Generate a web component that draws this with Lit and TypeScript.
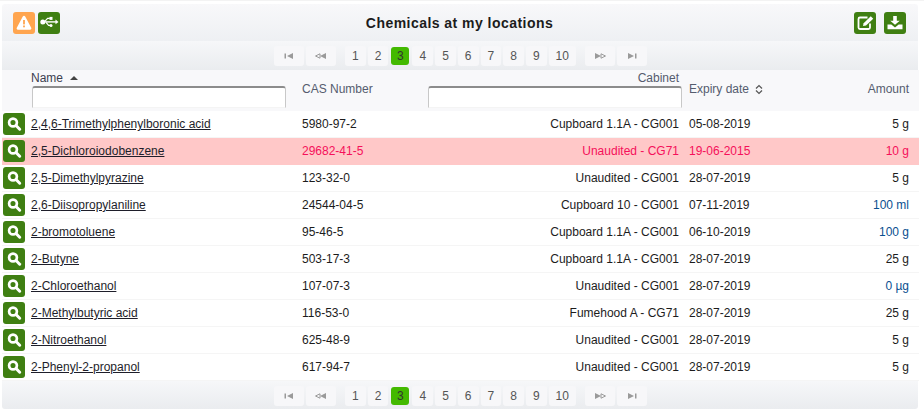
import { LitElement, html, css, svg } from "lit";
import { customElement } from "lit/decorators.js";

type Row = [string, string, string, string, string, boolean?];

const ROWS: Row[] = [
  ["2,4,6-Trimethylphenylboronic acid", "5980-97-2", "Cupboard 1.1A - CG001", "05-08-2019", "5 g"],
  ["2,5-Dichloroiodobenzene", "29682-41-5", "Unaudited - CG71", "19-06-2015", "10 g"],
  ["2,5-Dimethylpyrazine", "123-32-0", "Unaudited - CG001", "28-07-2019", "5 g"],
  ["2,6-Diisopropylaniline", "24544-04-5", "Cupboard 10 - CG001", "07-11-2019", "100 ml", true],
  ["2-bromotoluene", "95-46-5", "Cupboard 1.1A - CG001", "06-10-2019", "100 g", true],
  ["2-Butyne", "503-17-3", "Cupboard 1.1A - CG001", "28-07-2019", "25 g"],
  ["2-Chloroethanol", "107-07-3", "Unaudited - CG001", "28-07-2019", "0 µg", true],
  ["2-Methylbutyric acid", "116-53-0", "Fumehood A - CG71", "28-07-2019", "25 g"],
  ["2-Nitroethanol", "625-48-9", "Unaudited - CG001", "28-07-2019", "5 g"],
  ["2-Phenyl-2-propanol", "617-94-7", "Unaudited - CG001", "28-07-2019", "5 g"],
];

const PAGES = [1, 2, 3, 4, 5, 6, 7, 8, 9, 10];

const warnIcon = svg`<svg class="ico" viewBox="0 0 22 22"><path d="M11 3.800c.5 0 .9.3 1.200.8l6 11.200c.5 1-.1 1.900-1.100 1.900H4.900c-1 0-1.600-.9-1.100-1.900l6-11.200c.3-.5.7-.8 1.200-.8z" fill="#fff"/><rect x="10.100" y="8" width="1.800" height="4.400" fill="#ffa54f"/><rect x="10.100" y="13.500" width="1.800" height="1.800" fill="#ffa54f"/></svg>`;
const usbIcon = svg`<svg class="ico" viewBox="0 0 22 22"><path d="M3 9.200h15.500v1.400H3z" fill="#fff"/><circle cx="4.800" cy="9.900" r="2.500" fill="#fff"/><path d="M6.600 9.600l3-3.200h2.200M8 10.400l2.600 3h1.800" stroke="#fff" stroke-width="1.200" fill="none"/><rect x="11.500" y="4.900" width="3" height="3" fill="#fff"/><circle cx="13" cy="13.400" r="1.500" fill="#fff"/><path d="M17.500 7.500l3 2.400-3 2.400z" fill="#fff"/></svg>`;
const editIcon = svg`<svg class="ico" viewBox="0 0 22 22"><path d="M13.500 5.500H6A1.500 1.500 0 0 0 4.500 7v8.500A1.500 1.500 0 0 0 6 17h8.500a1.500 1.500 0 0 0 1.500-1.500V11.500" stroke="#fff" stroke-width="1.800" fill="none"/><path d="M9 14l.6-2.800 7.200-6.900 2.400 2.400-7.200 6.800z" fill="#fff"/></svg>`;
const dlIcon = svg`<svg class="ico" viewBox="0 0 22 22"><path d="M9.200 4h3.600v4.800h3L11 12.800 6.200 8.800h3z" fill="#fff"/><path d="M3.500 12.500h3.800L11 15.500l3.700-3h3.800v4.800h-15z" fill="#fff"/></svg>`;
const lensIcon = svg`<svg class="ico" viewBox="0 0 22 22"><circle cx="10" cy="9.500" r="3.900" fill="none" stroke="#fff" stroke-width="2.700"/><path d="M13 12.500l3.700 3.700" stroke="#fff" stroke-width="3" stroke-linecap="round"/></svg>`;

const glyphFirst = svg`<svg class="pg" viewBox="0 0 10 6"><rect x="0.500" y="0.500" width="1.500" height="5" /><path d="M9 0v6L3 3z"/></svg>`;
const glyphPrev = svg`<svg class="pg wide" viewBox="0 0 12 6"><path d="M5 .8v4.400L.5 3z" fill="none" stroke="#9a9a9a"/><path d="M11 0v6L5 3z"/></svg>`;
const glyphNext = svg`<svg class="pg wide" viewBox="0 0 12 6"><path d="M1 0v6l6-3z"/><path d="M7 .8v4.400L11.500 3z" fill="none" stroke="#9a9a9a"/></svg>`;
const glyphLast = svg`<svg class="pg" viewBox="0 0 10 6"><path d="M1 0v6l6-3z"/><rect x="8" y="0.500" width="1.500" height="5" /></svg>`;

@customElement("app-root")
export class AppRoot extends LitElement {
  static styles = css`
    :host {
      display: block;
      width: 924px;
      height: 410px;
      background: #fff;
      box-shadow: inset 0 1px 0 #f3f3f3;
      font-family: "Liberation Sans", Arial, sans-serif;
      font-size: 12px;
      color: #1c1c1c;
      overflow: hidden;
    }
    .panel {
      box-sizing: border-box;
      width: 917px;
      margin-left: 2px;
      padding-top: 4px;
    }
    .bar {
      box-sizing: border-box;
      height: 37px;
      width: 916px;
      padding: 8px 12px 0 11px;
      display: flex;
      background: linear-gradient(#f8f8fa, #eef0f3);
      border-radius: 3px 3px 0 0;
    }
    .tools {
      display: flex;
      gap: 3px;
    }
    .tools.right {
      gap: 8px;
    }
    .title {
      flex: 1;
      text-align: center;
      padding-left: 5px;
      font-size: 14px;
      font-weight: bold;
      line-height: 22px;
      letter-spacing: 0.46px;
      color: #1c1c1c;
    }
    .btn {
      display: block;
      width: 22px;
      height: 22px;
      border-radius: 3px;
      background: #3f7f12;
    }
    .btn.warn {
      background: #ffa54f;
    }
    .ico {
      display: block;
      width: 22px;
      height: 22px;
    }
    .pager {
      box-sizing: border-box;
      width: 916px;
      height: 29px;
      padding-top: 5px;
      padding-left: 3px;
      display: flex;
      justify-content: center;
      background: linear-gradient(#f6f7f9, #eaecef);
    }
    .pager.bottom {
      height: 28px;
      border-radius: 0 0 3px 3px;
    }
    .pbtn {
      box-sizing: border-box;
      height: 20px;
      padding: 0 7px;
      margin-right: 2px;
      border-radius: 3px;
      background: #f7f7f9;
      color: #555;
      line-height: 20px;
      text-align: center;
    }
    .pbtn.nav {
      width: 30px;
      padding: 0;
      display: flex;
      align-items: center;
      justify-content: center;
    }
    .pbtn.cur {
      min-width: 18px;
      height: 18px;
      line-height: 18px;
      padding: 0 2px;
      margin: 1px 3px 0 1px;
      background: #43b900;
      color: #333;
    }
    .pbtn.gap-r {
      margin-right: 9px;
    }
    .pg {
      display: block;
      width: 10px;
      height: 6px;
      fill: #9a9a9a;
    }
    .pg.wide {
      width: 12px;
    }
    .row,
    .head {
      display: grid;
      grid-template-columns: 29px 271px 120px 257px 110px 130px;
      width: 917px;
    }
    .head {
      height: 41px;
      background: #f8f8fa;
      color: #555c6e;
    }
    .hname {
      padding-top: 1px;
    }
    .hlabel {
      line-height: 14px;
      color: #3c4050;
      display: flex;
      align-items: center;
      gap: 7px;
    }
    .arrow {
      width: 0;
      height: 0;
      border-left: 4px solid transparent;
      border-right: 4px solid transparent;
      border-bottom: 4px solid #444;
    }
    .filter {
      box-sizing: border-box;
      display: block;
      width: 254px;
      height: 22px;
      margin: 1px 0 0 1px;
      background: #fff;
      border: 1px solid #c8c8c8;
      border-top: 2px solid #8c8c8c;
      border-bottom-color: #f4f4f4;
      border-radius: 3px 3px 0 0;
      padding: 0;
    }
    .hcab {
      padding-top: 1px;
    }
    .hcab .lab {
      text-align: right;
      line-height: 14px;
      color: #555c6e;
    }
    .hcab .filter {
      margin: 1px 0 0 6px;
    }
    .hmid {
      line-height: 38px;
    }
    .hexp {
      padding-left: 10px;
      display: flex;
      align-items: center;
      gap: 6px;
      height: 38px;
    }
    .sort {
      display: block;
      width: 8px;
      height: 11px;
    }
    .hamt {
      text-align: right;
      padding-right: 10px;
      line-height: 38px;
    }
    .row {
      height: 27px;
      line-height: 26px;
      border-bottom: 1px solid #f5f5f5;
      box-sizing: border-box;
      background: #fff;
    }
    .row.alert {
      background: #ffc8c8;
      border-bottom-color: #ffc8c8;
      color: #f5105a;
    }
    .row .btn {
      margin: 2px 0 0 1px;
    }
    .name {
      color: #1e1e2a;
      text-decoration: underline;
    }
    .cab {
      text-align: right;
    }
    .exp {
      padding-left: 10px;
    }
    .amt {
      text-align: right;
      padding-right: 10px;
    }
    .amt.big {
      color: #0a4f90;
    }
  `;

  private pager(bottom: boolean) {
    return html`<div class="pager ${bottom ? "bottom" : ""}">
      <span class="pbtn nav">${glyphFirst}</span>
      <span class="pbtn nav gap-r">${glyphPrev}</span>
      ${PAGES.map(
        (p) => html`<span class="pbtn ${p === 3 ? "cur" : ""} ${p === 10 ? "gap-r" : ""}">${p}</span>`
      )}
      <span class="pbtn nav">${glyphNext}</span>
      <span class="pbtn nav">${glyphLast}</span>
    </div>`;
  }

  render() {
    return html`<div class="panel">
      <div class="bar">
        <div class="tools">
          <span class="btn warn">${warnIcon}</span>
          <span class="btn">${usbIcon}</span>
        </div>
        <div class="title">Chemicals at my locations</div>
        <div class="tools right">
          <span class="btn">${editIcon}</span>
          <span class="btn">${dlIcon}</span>
        </div>
      </div>
      ${this.pager(false)}
      <div class="head">
        <div></div>
        <div class="hname">
          <div class="hlabel">Name <span class="arrow"></span></div>
          <input class="filter" />
        </div>
        <div class="hmid">CAS Number</div>
        <div class="hcab">
          <div class="lab">Cabinet</div>
          <input class="filter" />
        </div>
        <div class="hexp">
          Expiry date
          <svg class="sort" viewBox="0 0 8 11">
            <path d="M1 4.500l3-3 3 3M1 6.500l3 3 3-3" fill="none" stroke="#555" stroke-width="1.200" />
          </svg>
        </div>
        <div class="hamt">Amount</div>
      </div>
      ${ROWS.map(
        (r, i) => html`<div class="row ${i === 1 ? "alert" : ""}">
          <span class="btn">${lensIcon}</span>
          <span><span class="name">${r[0]}</span></span>
          <span>${r[1]}</span>
          <span class="cab">${r[2]}</span>
          <span class="exp">${r[3]}</span>
          <span class="amt ${r[5] ? "big" : ""}">${r[4]}</span>
        </div>`
      )}
      ${this.pager(true)}
    </div>`;
  }
}
